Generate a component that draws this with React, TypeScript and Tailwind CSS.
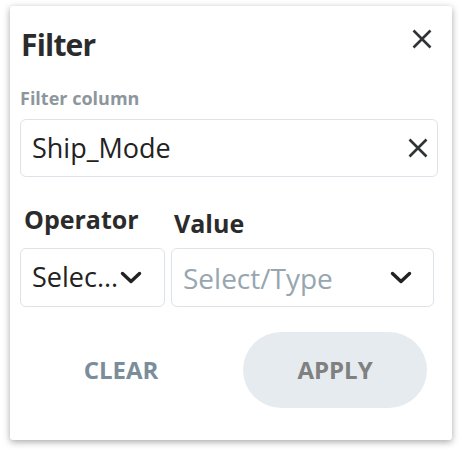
import React from "react";

const XIcon = ({ className }: { className?: string }) => (
  <svg viewBox="0 0 20 20" className={className} fill="none" stroke="currentColor" strokeWidth={2.6} strokeLinecap="butt">
    <path d="M1.5 1.5 L18.5 18.5 M18.5 1.5 L1.5 18.5" />
  </svg>
);

const Chevron = ({ className }: { className?: string }) => (
  <svg viewBox="0 0 22 13" className={className} fill="none" stroke="currentColor" strokeWidth={3.4} strokeLinecap="round" strokeLinejoin="round">
    <path d="M2.5 2.5 L11 10.5 L19.5 2.5" />
  </svg>
);

export default function App() {
  return (
    <div className="w-[462px] h-[454px] bg-white pt-[6px] pl-[10px]" style={{ fontFamily: '"Open Sans", sans-serif' }}>
      <div className="w-[442px] h-[434px] bg-white rounded-[3px] shadow-[0_2px_7px_rgba(0,0,0,0.35)] pl-[10px] pr-[4px] pt-[24px] flex flex-col">
        <div className="flex items-start justify-between">
          <div className="text-[30px] leading-[30px] font-bold tracking-[-0.8px] text-[#2b2b2b] pl-[1px]">Filter</div>
          <button className="w-[20px] h-[20px] -mt-[1px] mr-[16px] text-[#2f3437]">
            <XIcon className="w-[20px] h-[20px]" />
          </button>
        </div>
        <div className="mt-[29px] text-[18px] leading-[18px] font-bold text-[#8d969d]">Filter column</div>
        <div className="mt-[12px] h-[58px] w-[418px] border border-[#dde3e8] rounded-[6px] flex items-center justify-between pl-[11px] pr-[9px]">
          <span className="text-[27px] text-[#222222]">Ship_Mode</span>
          <XIcon className="w-[20px] h-[20px] text-[#2f3437]" />
        </div>
        <div className="mt-[30px] flex items-start">
          <div className="w-[151px] pl-[4px] text-[25px] leading-[25px] font-bold text-[#2b2b2b]">Operator</div>
          <div className="mt-[4px] pl-[3px] text-[25px] leading-[25px] font-bold text-[#2b2b2b]">Value</div>
        </div>
        <div className="mt-[12px] flex gap-[6px]">
          <div className="w-[145px] h-[59px] border border-[#dde3e8] rounded-[6px] flex items-center pl-[11px]">
            <span className="text-[27px] text-[#222222] w-[88px] whitespace-nowrap overflow-hidden">Selec...</span>
            <Chevron className="w-[22px] h-[13px] text-[#222222]" />
          </div>
          <div className="w-[263px] h-[59px] border border-[#dde3e8] rounded-[6px] flex items-center justify-between pl-[11px] pr-[21px]">
            <span className="text-[28px] text-[#97a6b0]">Select/Type</span>
            <Chevron className="w-[22px] h-[13px] text-[#222222]" />
          </div>
        </div>
        <div className="mt-[25px] flex gap-[30px] pl-[9px]">
          <button className="w-[184px] h-[76px] rounded-full text-[24px] font-bold text-[#7b8d9a]">CLEAR</button>
          <button className="w-[184px] h-[76px] rounded-full bg-[#e6ebef] text-[24px] font-bold text-[#808080]">APPLY</button>
        </div>
      </div>
    </div>
  );
}
